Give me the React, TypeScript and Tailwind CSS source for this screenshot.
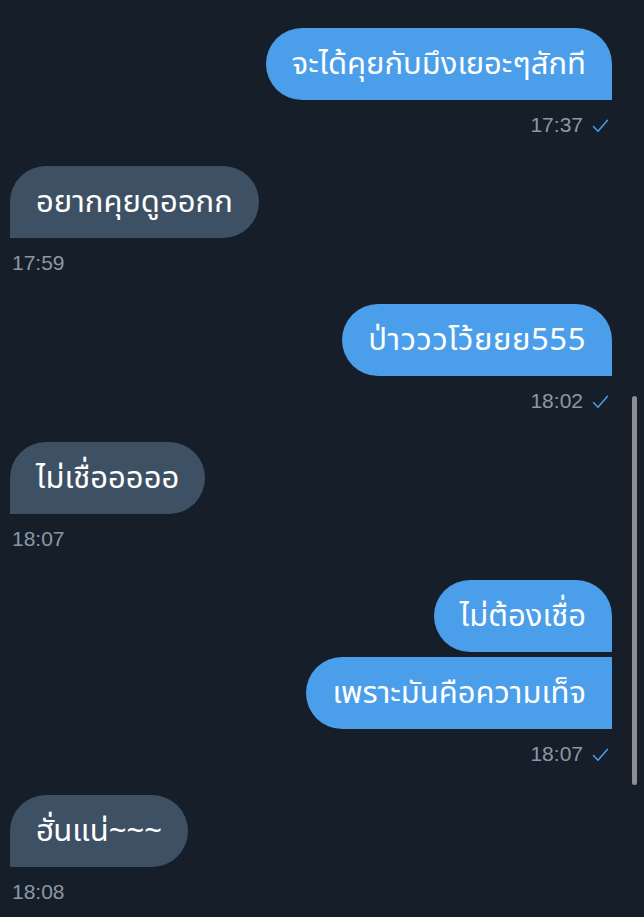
import React from "react";

type Msg = { side: "me" | "them"; texts: string[]; time: string };

const msgs: Msg[] = [
  { side: "me", texts: ["จะได้คุยกับมึงเยอะๆสักที"], time: "17:37" },
  { side: "them", texts: ["อยากคุยดูออกก"], time: "17:59" },
  { side: "me", texts: ["ป่าวววโว้ยยย555"], time: "18:02" },
  { side: "them", texts: ["ไม่เชื่อออออ"], time: "18:07" },
  { side: "me", texts: ["ไม่ต้องเชื่อ", "เพราะมันคือความเท็จ"], time: "18:07" },
  { side: "them", texts: ["ฮั่นแน่~~~"], time: "18:08" },
];

const thai = { fontFamily: '"Noto Sans Thai", "Noto Sans", "Liberation Sans", sans-serif' };
const latin = { fontFamily: '"Liberation Sans", Arial, sans-serif' };

function Check() {
  return (
    <svg width="17" height="14" viewBox="0 0 17 14" className="ml-[9px] mt-[1px]">
      <path d="M1.5 7.5 L6 12.2 L15.5 1.2" fill="none" stroke="#4b9ee9" strokeWidth="1.5" strokeLinecap="round" strokeLinejoin="round" />
    </svg>
  );
}

export default function App() {
  return (
    <div className="relative w-[644px] h-[917px] overflow-hidden bg-[#161f29]">
      <div className="flex flex-col pt-[28px] pl-[10px] pr-[32px]">
        {msgs.map((m, i) => (
          <div key={i} className={`flex flex-col ${m.side === "me" ? "items-end" : "items-start"} mb-[28px]`}>
            <div className={`flex flex-col gap-[5px] ${m.side === "me" ? "items-end" : "items-start"}`}>
              {m.texts.map((t, j) => {
                let cls = "";
                if (m.side === "me") {
                  cls = "bg-[#4b9ee9] rounded-l-[36px] " + (j === 0 ? "rounded-tr-[36px]" : "");
                } else {
                  cls = "bg-[#3e5164] rounded-r-[36px] " + (j === 0 ? "rounded-tl-[36px]" : "");
                }
                return (
                  <div
                    key={j}
                    className={`${cls} h-[72px] px-[26px] flex items-center text-white text-[31px] leading-none ${t.includes("555") ? "tracking-[0.6px]" : ""}`}
                    style={thai}
                  >
                    {t}
                  </div>
                );
              })}
            </div>
            <div
              className={`mt-[12px] h-[26px] flex items-center text-[21px] text-[#8b98a5] ${m.side === "me" ? "pr-[3px]" : "pl-[2px]"}`}
              style={latin}
            >
              <span>{m.time}</span>
              {m.side === "me" && <Check />}
            </div>
          </div>
        ))}
      </div>
      <div className="absolute left-[632px] top-[396px] w-[5px] h-[389px] rounded-full bg-[#8b8e95]" />
    </div>
  );
}
